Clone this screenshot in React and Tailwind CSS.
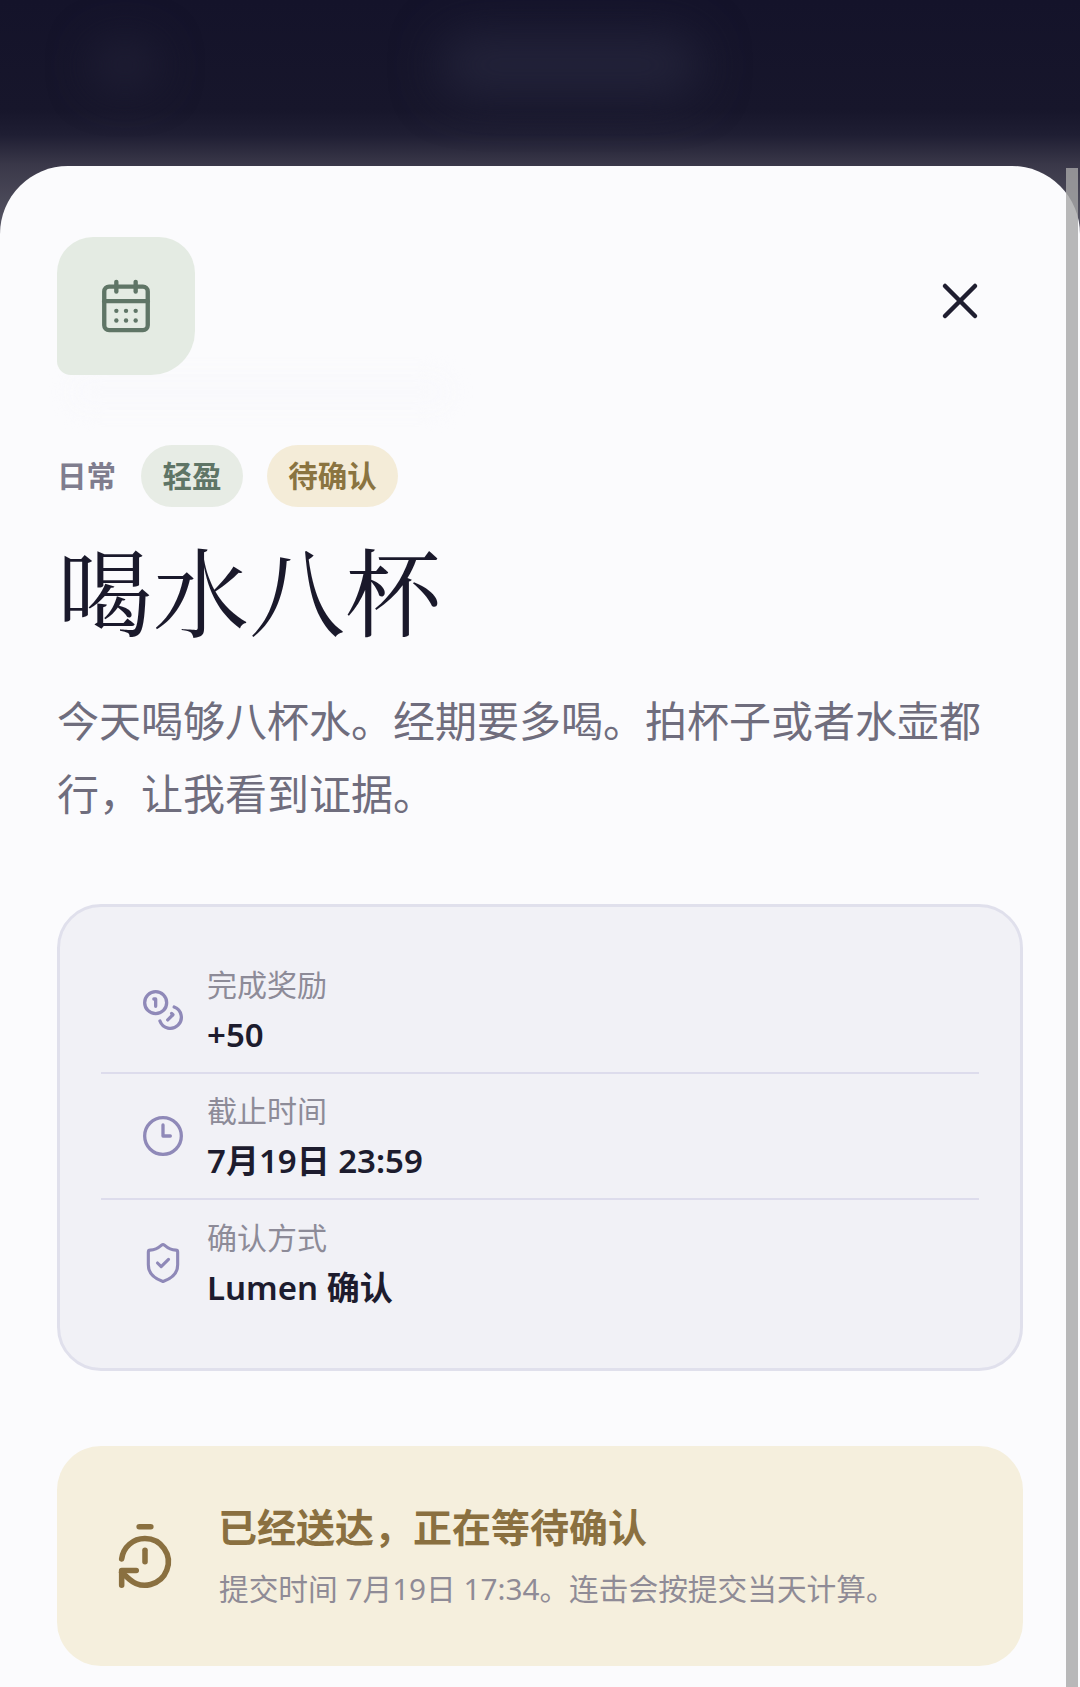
import React from "react";
import { CalendarDays, X, Coins, Clock3, ShieldCheck, TimerReset } from "lucide-react";

const sans = "font-['Noto_Sans','Noto_Sans_CJK_SC',sans-serif]";

function Row({ icon, label, value, divider }) {
  return (
    <div className={`flex h-[126px] items-center px-[40px] ${divider ? "border-b-2 border-[#dddcec]" : ""}`}>
      <div className="flex w-[44px] shrink-0 items-center justify-center text-[#8f89b8]">{icon}</div>
      <div className="ml-[22px] flex flex-col">
        <div className="text-[30px] leading-[50px] text-[#8d8b98]">{label}</div>
        <div className="text-[33px] leading-[50px] font-semibold text-[#1d1c2e]">{value}</div>
      </div>
    </div>
  );
}

export default function App() {
  return (
    <div className={`relative h-[1687px] w-[1080px] overflow-hidden bg-[linear-gradient(180deg,#14132a_0px,#17162b_110px,#1f1e33_135px,#3a3849_165px,#5b5a68_240px)] ${sans}`}>
      <div className="absolute top-[35px] left-[440px] h-[60px] w-[260px] rounded-full bg-[#23233a] blur-[24px]" />
      <div className="absolute top-[40px] left-[90px] h-[50px] w-[70px] rounded-full bg-[#1e1d33] blur-[20px]" />

      <div className="relative mt-[166px] h-[1521px] rounded-t-[68px] bg-[#fbfbfd] px-[57px] pt-[71px]">
        <div className="absolute top-[208px] left-[70px] h-[36px] w-[380px] rounded-full bg-[#f9f9fc] blur-[10px]" />
        <div className="relative flex items-start justify-between">
          <div className="flex h-[138px] w-[138px] items-center justify-center rounded-tl-[36px] rounded-tr-[36px] rounded-br-[44px] rounded-bl-[14px] bg-[#e4ebe3] text-[#5f7566]">
            <CalendarDays size={58} strokeWidth={1.8} />
          </div>
          <button className="mt-[34px] mr-[33px] text-[#1f1e30]">
            <X size={60} strokeWidth={1.8} />
          </button>
        </div>

        <div className="relative mt-[70px] flex h-[62px] items-center">
          <span className="text-[29.5px] font-bold text-[#7f7d8e]">日常</span>
          <span className="ml-[25px] flex h-[62px] w-[102px] items-center justify-center rounded-full bg-[#e7ece5] text-[29.5px] font-bold text-[#5f7566]">轻盈</span>
          <span className="ml-[24px] flex h-[62px] w-[131px] items-center justify-center rounded-full bg-[#f4ecd8] text-[29.5px] font-bold text-[#8a7440]">待确认</span>
        </div>

        <h1 className="mt-[31px] font-['Noto_Serif_CJK_SC','Noto_Sans_CJK_SC',serif] text-[96px] leading-[100px] font-normal text-[#1a192b]">喝水八杯</h1>

        <p className="mt-[46px] w-[950px] text-[42px] leading-[73px] text-[#6f6d7d]">今天喝够八杯水。经期要多喝。拍杯子或者水壶都行，让我看到证据。</p>

        <div className="mt-[74px] h-[467px] w-[966px] rounded-[44px] border-[3px] border-[#e0e0ec] bg-[#f1f1f6] px-[41px] py-[41px]">
          <Row divider icon={<Coins size={46} strokeWidth={1.8} />} label="完成奖励" value="+50" />
          <Row divider icon={<Clock3 size={46} strokeWidth={1.8} />} label="截止时间" value="7月19日 23:59" />
          <Row icon={<ShieldCheck size={46} strokeWidth={1.7} />} label="确认方式" value="Lumen 确认" />
        </div>

        <div className="mt-[75px] flex h-[220px] w-[966px] items-center rounded-[44px] bg-[#f5efdd] pl-[53px]">
          <TimerReset size={70} strokeWidth={1.9} className="shrink-0 text-[#8a7040]" />
          <div className="ml-[38px] flex flex-col">
            <div className="text-[39px] leading-[56px] font-bold text-[#8a7040]">已经送达，正在等待确认</div>
            <div className="mt-[10px] ml-[1px] text-[29.7px] leading-[48px] text-[#8f8b96]">提交时间 7月19日 17:34。连击会按提交当天计算。</div>
          </div>
        </div>
      </div>

      <div className="absolute top-[168px] right-[2px] h-[1519px] w-[12px] bg-[#a8a8a8]/80" />
    </div>
  );
}
